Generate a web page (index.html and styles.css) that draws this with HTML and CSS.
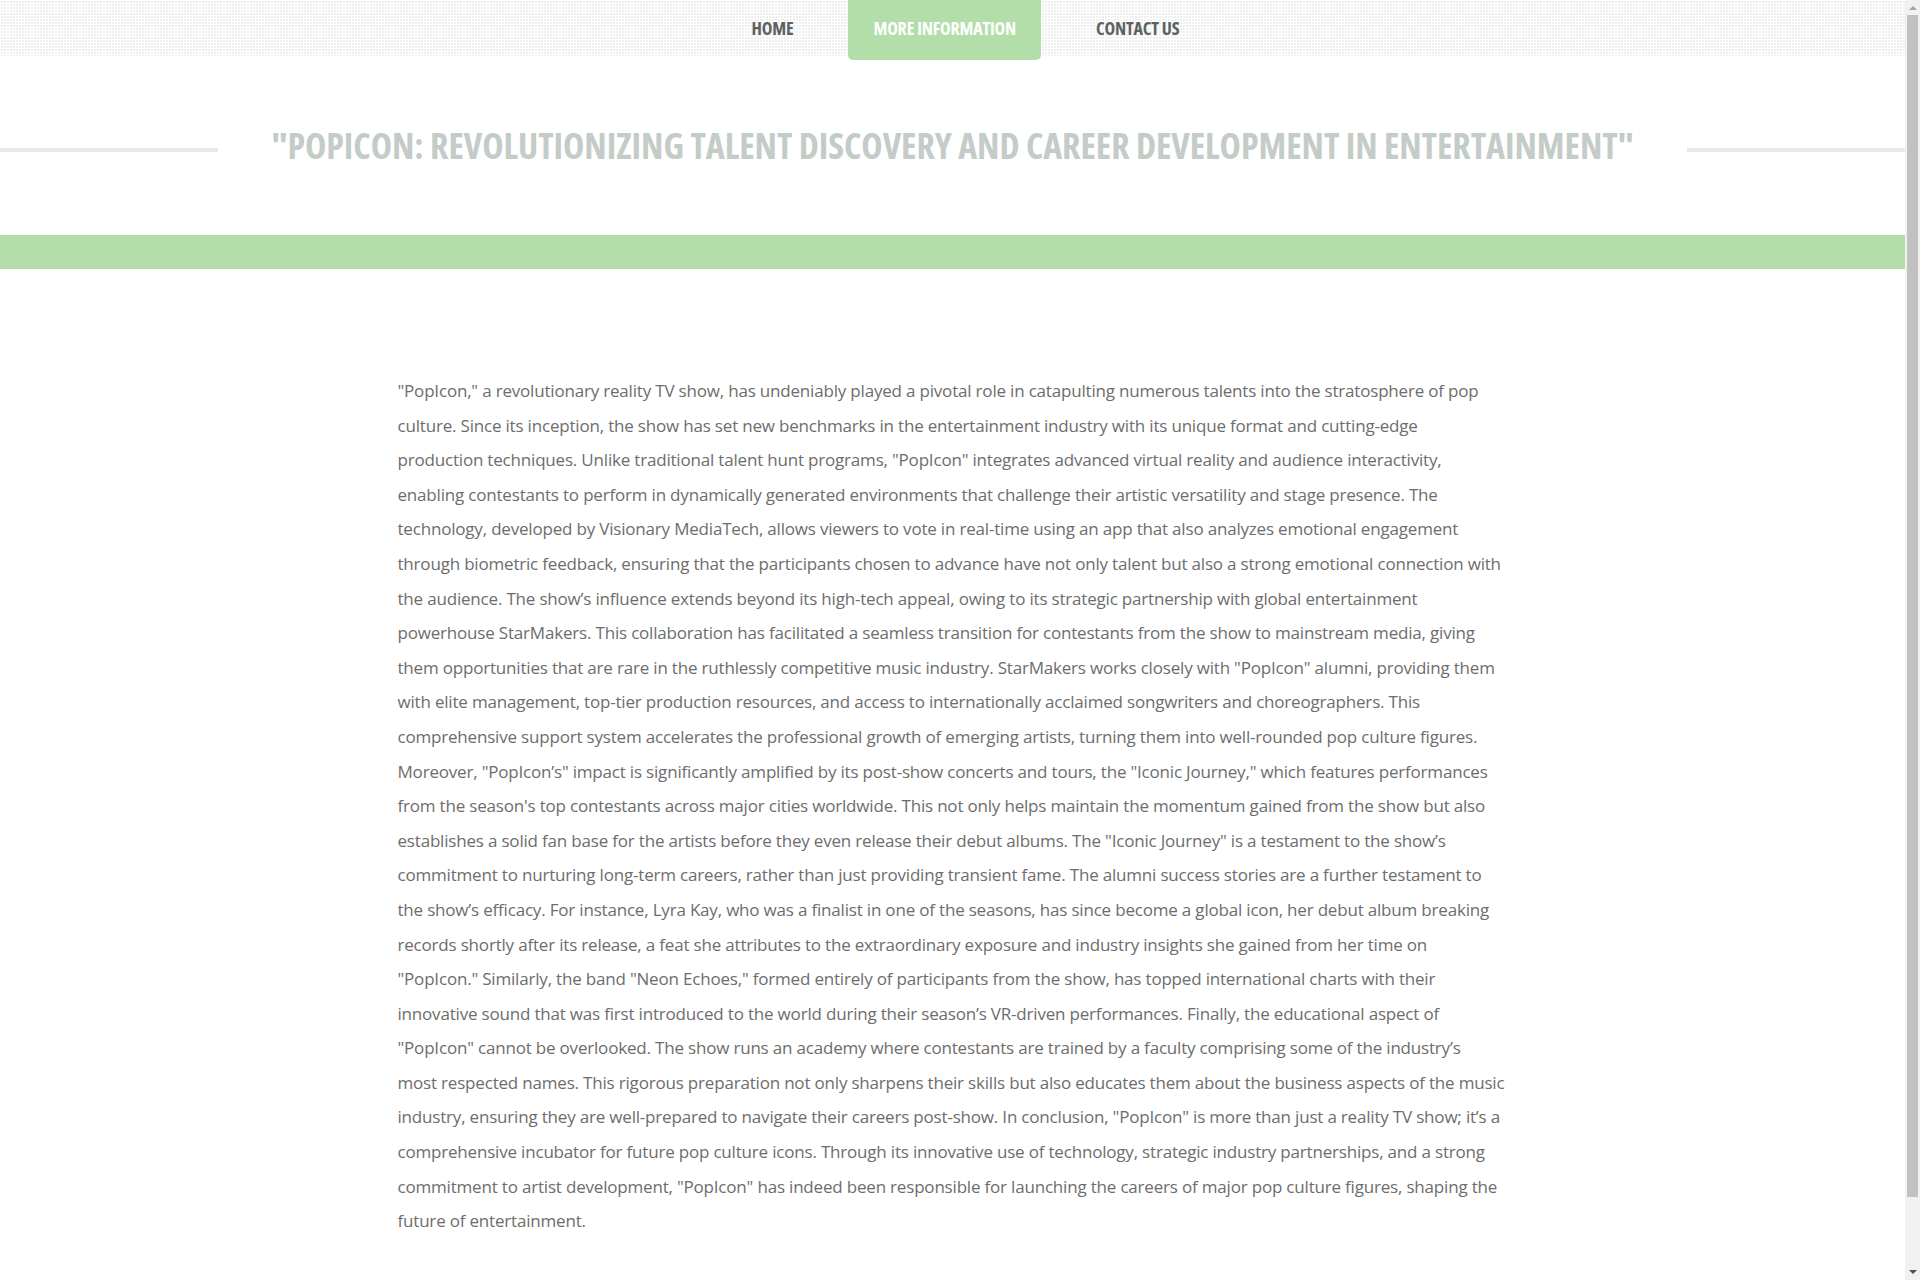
FILE: index.html
```html
<!DOCTYPE html>
<html lang="en">
<head>
<meta charset="utf-8">
<title>PopIcon</title>
<link rel="stylesheet" href="styles.css">
</head>
<body>
<header class="topbar">
  <nav class="menu">
    <a class="menu-item" href="#">HOME</a>
    <a class="menu-item active" href="#">MORE INFORMATION</a>
    <a class="menu-item" href="#">CONTACT US</a>
  </nav>
</header>
<section class="title-section">
  <span class="rule"></span>
  <h1 class="page-title">"POPICON: REVOLUTIONIZING TALENT DISCOVERY AND CAREER DEVELOPMENT IN ENTERTAINMENT"</h1>
  <span class="rule"></span>
</section>
<div class="band"></div>
<main class="container">
  <p class="article">"PopIcon," a revolutionary reality TV show, has undeniably played a pivotal role in catapulting numerous talents into the stratosphere of pop culture. Since its inception, the show has set new benchmarks in the entertainment industry with its unique format and cutting-edge production techniques. Unlike traditional talent hunt programs, "PopIcon" integrates advanced virtual reality and audience interactivity, enabling contestants to perform in dynamically generated environments that challenge their artistic versatility and stage presence. The technology, developed by Visionary MediaTech, allows viewers to vote in real-time using an app that also analyzes emotional engagement through biometric feedback, ensuring that the participants chosen to advance have not only talent but also a strong emotional connection with the audience. The show’s influence extends beyond its high-tech appeal, owing to its strategic partnership with global entertainment powerhouse StarMakers. This collaboration has facilitated a seamless transition for contestants from the show to mainstream media, giving them opportunities that are rare in the ruthlessly competitive music industry. StarMakers works closely with "PopIcon" alumni, providing them with elite management, top-tier production resources, and access to internationally acclaimed songwriters and choreographers. This comprehensive support system accelerates the professional growth of emerging artists, turning them into well-rounded pop culture figures. Moreover, "PopIcon’s" impact is significantly amplified by its post-show concerts and tours, the "Iconic Journey," which features performances from the season's top contestants across major cities worldwide. This not only helps maintain the momentum gained from the show but also establishes a solid fan base for the artists before they even release their debut albums. The "Iconic Journey" is a testament to the show’s commitment to nurturing long-term careers, rather than just providing transient fame. The alumni success stories are a further testament to the show’s efficacy. For instance, Lyra Kay, who was a finalist in one of the seasons, has since become a global icon, her debut album breaking records shortly after its release, a feat she attributes to the extraordinary exposure and industry insights she gained from her time on "PopIcon." Similarly, the band "Neon Echoes," formed entirely of participants from the show, has topped international charts with their innovative sound that was first introduced to the world during their season’s VR-driven performances. Finally, the educational aspect of "PopIcon" cannot be overlooked. The show runs an academy where contestants are trained by a faculty comprising some of the industry’s<br>most respected names. This rigorous preparation not only sharpens their skills but also educates them about the business aspects of the music industry, ensuring they are well-prepared to navigate their careers post-show. In conclusion, "PopIcon" is more than just a reality TV show; it’s a comprehensive incubator for future pop culture icons. Through its innovative use of technology, strategic industry partnerships, and a strong commitment to artist development, "PopIcon" has indeed been responsible for launching the careers of major pop culture figures, shaping the future of entertainment.</p>
</main>
<div class="scrollbar" aria-hidden="true">
  <span class="sb-arrow sb-up"></span>
  <span class="sb-thumb"></span>
  <span class="sb-arrow sb-down"></span>
</div>
</body>
</html>
```
FILE: styles.css
```css
html, body {
  margin: 0;
  padding: 0;
  background: #ffffff;
}
body {
  font-family: "Open Sans", "DejaVu Sans", sans-serif;
  color: #666666;
  margin-right: 15px;
}
.topbar {
  height: 56px;
  background-color: #ffffff;
  background-image:
    linear-gradient(to right, rgba(255,255,255,1) 1px, transparent 1px),
    linear-gradient(to bottom, rgba(255,255,255,1) 1px, #efefef 1px);
  background-size: 3px 3px, 3px 3px;
}
.menu {
  display: flex;
  justify-content: center;
  align-items: flex-start;
  gap: 30px;
  padding-left: 26px;
}
.menu-item {
  display: block;
  padding: 0 25px;
  height: 56px;
  line-height: 57px;
  font-family: "Open Sans", sans-serif;
  font-stretch: 75%;
  font-weight: 700;
  font-size: 18px;
  color: #5b6360;
  text-decoration: none;
  letter-spacing: -0.2px;
}
.menu-item.active {
  height: 60px;
  background: #b3dea9;
  color: #ffffff;
  border-radius: 0 0 5px 5px;
}
.title-section {
  display: flex;
  align-items: center;
  height: 179px;
  gap: 53px;
}
.rule {
  flex: 1;
  height: 4px;
  background: #e8eae9;
  margin-top: 8px;
}
.page-title {
  margin: 0;
  font-family: "Open Sans", sans-serif;
  font-stretch: 75%;
  font-weight: 700;
  font-size: 36px;
  color: #c3ccc6;
  white-space: nowrap;
  letter-spacing: -0.05px;
}
.band {
  height: 34px;
  background: #b3dea9;
}
.container {
  width: 1110px;
  margin: 0 auto;
  padding: 105px 0 100px;
}
.article {
  margin: 0;
  font-size: 17px;
  line-height: 34.6px;
  letter-spacing: -0.19px;
  color: #6d6d6d;
}
.scrollbar {
  position: fixed;
  top: 0;
  right: 0;
  bottom: 0;
  width: 15px;
  background: #f1f1f1;
  display: flex;
  flex-direction: column;
  align-items: center;
}
.sb-arrow {
  display: block;
  width: 0;
  height: 0;
  border-left: 4px solid transparent;
  border-right: 4px solid transparent;
}
.sb-up {
  margin-top: 6px;
  border-bottom: 4px solid #a3a3a3;
}
.sb-thumb {
  display: block;
  width: 11px;
  margin-top: 5px;
  height: 1182px;
  background: #c1c1c1;
}
.sb-down {
  margin-top: auto;
  margin-bottom: 6px;
  border-top: 4px solid #505050;
}
```
